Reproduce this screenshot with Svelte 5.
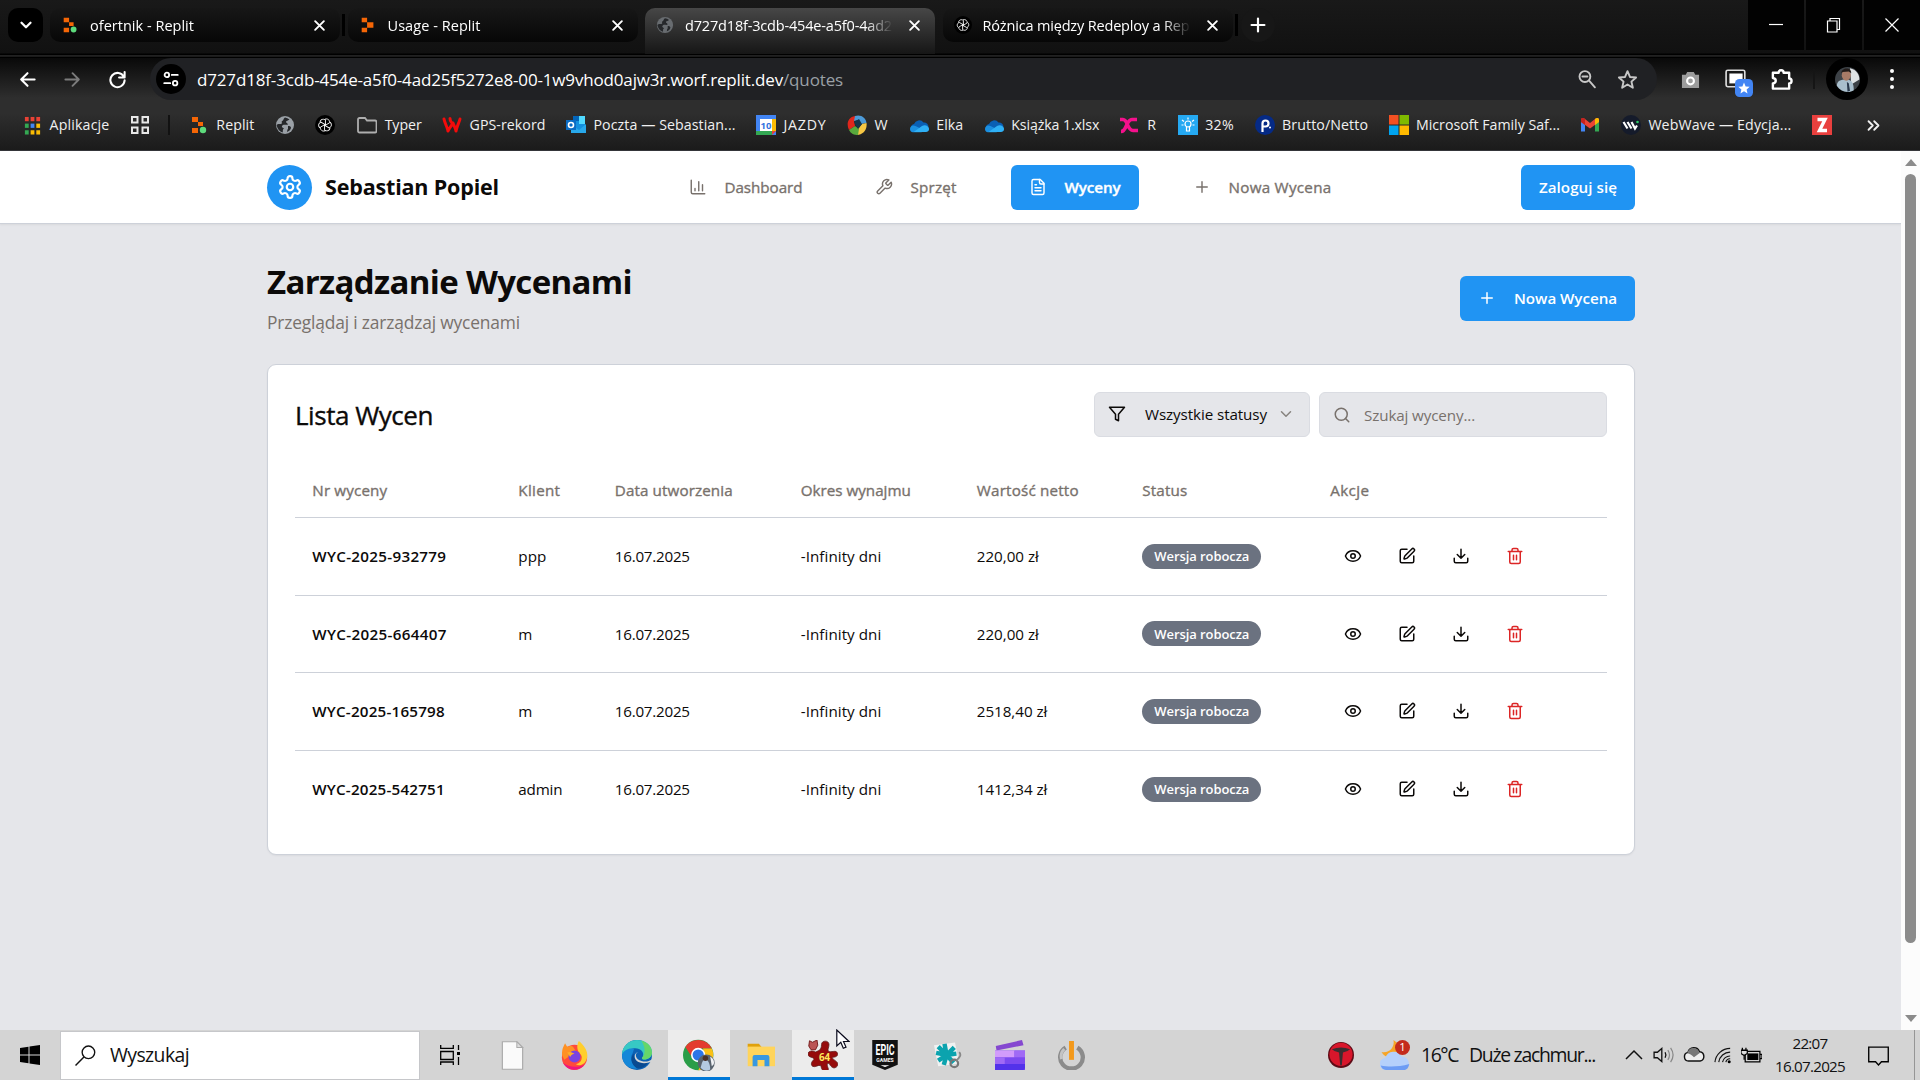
<script>
  // Sets a label to an exact width by spreading the difference over its letters.
  function fit(node, width) {
    node.style.display = 'inline-block';
    node.style.whiteSpace = 'pre';
    const natural = node.getBoundingClientRect().width;
    node.style.letterSpacing = (width - natural) / node.textContent.length + 'px';
    node.style.width = width + 'px';
  }

  const doc = '<path d="M15 2H6a2 2 0 0 0-2 2v16a2 2 0 0 0 2 2h12a2 2 0 0 0 2-2V7Z"/><path d="M14 2v4a2 2 0 0 0 2 2h4M10 9H8M16 13H8M16 17H8"/>';
  // Stroke icons on a 24 unit grid
  const line = {
    gear: '<path d="M12.22 2h-.44a2 2 0 0 0-2 2v.18a2 2 0 0 1-1 1.73l-.43.25a2 2 0 0 1-2 0l-.15-.08a2 2 0 0 0-2.73.73l-.22.38a2 2 0 0 0 .73 2.73l.15.1a2 2 0 0 1 1 1.72v.51a2 2 0 0 1-1 1.74l-.15.09a2 2 0 0 0-.73 2.73l.22.38a2 2 0 0 0 2.73.73l.15-.08a2 2 0 0 1 2 0l.43.25a2 2 0 0 1 1 1.73V20a2 2 0 0 0 2 2h.44a2 2 0 0 0 2-2v-.18a2 2 0 0 1 1-1.73l.43-.25a2 2 0 0 1 2 0l.15.08a2 2 0 0 0 2.73-.73l.22-.39a2 2 0 0 0-.73-2.73l-.15-.08a2 2 0 0 1-1-1.74v-.5a2 2 0 0 1 1-1.74l.15-.09a2 2 0 0 0 .73-2.73l-.22-.38a2 2 0 0 0-2.73-.73l-.15.08a2 2 0 0 1-2 0l-.43-.25a2 2 0 0 1-1-1.73V4a2 2 0 0 0-2-2z"/><circle cx="12" cy="12" r="3"/>',
    chart: '<path d="M3 3v16a2 2 0 0 0 2 2h16M18 17V9M13 17V5M8 17v-3"/>',
    wrench: '<path d="M14.7 6.3a1 1 0 0 0 0 1.4l1.6 1.6a1 1 0 0 0 1.4 0l3.77-3.77a6 6 0 0 1-7.94 7.94l-6.91 6.91a2.12 2.12 0 0 1-3-3l6.91-6.91a6 6 0 0 1 7.94-7.94l-3.76 3.76z"/>',
    doc,
    plus: '<path d="M5 12h14M12 5v14"/>',
    filter: '<path d="M22 3H2l8 9.46V19l4 2v-8.54z"/>',
    down: '<path d="m6 9 6 6 6-6"/>',
    search: '<circle cx="11" cy="11" r="8"/><path d="m21 21-4.3-4.3"/>',
    eye: '<path d="M2.06 12.35a1 1 0 0 1 0-.7 10.75 10.75 0 0 1 19.88 0 1 1 0 0 1 0 .7 10.75 10.75 0 0 1-19.88 0"/><circle cx="12" cy="12" r="3"/>',
    pen: '<path d="M12 3H5a2 2 0 0 0-2 2v14a2 2 0 0 0 2 2h14a2 2 0 0 0 2-2v-7"/><path d="M18.38 2.62a1 1 0 0 1 3 3l-9.01 9.02a2 2 0 0 1-.85.5l-2.87.84a.5.5 0 0 1-.62-.62l.84-2.87a2 2 0 0 1 .5-.85z"/>',
    download: '<path d="M21 15v4a2 2 0 0 1-2 2H5a2 2 0 0 1-2-2v-4M7 10l5 5 5-5M12 15V3"/>',
    trash: '<path d="M3 6h18M19 6v14a2 2 0 0 1-2 2H7a2 2 0 0 1-2-2V6M8 6V4a2 2 0 0 1 2-2h4a2 2 0 0 1 2 2v2M10 11v6M14 11v6"/>',
    back: '<path d="M21 12H4M12 4l-8 8 8 8"/>',
    forward: '<path d="M3 12h17M12 4l8 8-8 8"/>',
    reload: '<path d="M20 8.5A9 9 0 1 0 21 13M21 2.500v7h-7"/>',
    close: '<path d="M5 5l14 14M19 5 5 19"/>',
    zoomout: '<circle cx="9.500" cy="9" r="6.500"/><path d="m14.500 14 7 8M6.500 9h6"/>',
    star: '<path d="m12 2.500 2.800 6.600 7 .6-5.300 4.700 1.600 7-6.100-3.700-6.100 3.700 1.600-7L2.200 9.700l7-.6z"/>',
    puzzle: '<path d="M3 5h6a2.600 2.600 0 0 1 5.200 0H20v6a2.500 2.500 0 0 1 0 5v5.500H3v-5.500c4-.5 4-5 0-5.500z"/>',
    tune: '<circle cx="6.500" cy="6.500" r="3"/><path d="M13 6.500h8M3 17.500h8"/><circle cx="17.500" cy="17.500" r="3"/>',
    raquo: '<path d="m5 6 6 6-6 6M13 6l6 6-6 6"/>'
  };

  const gptKnot = '<g fill="none" stroke="#fff" stroke-width=".9"><path id="k" d="M10 4.200c2.400-1 5 .8 4.600 3.600l-4.800 2.800"/><path d="M10 4.200c2.400-1 5 .8 4.600 3.600l-4.800 2.800" transform="rotate(60 10 10)"/><path d="M10 4.200c2.400-1 5 .8 4.600 3.600l-4.800 2.800" transform="rotate(120 10 10)"/><path d="M10 4.200c2.400-1 5 .8 4.600 3.600l-4.800 2.800" transform="rotate(180 10 10)"/><path d="M10 4.200c2.400-1 5 .8 4.600 3.600l-4.800 2.800" transform="rotate(240 10 10)"/><path d="M10 4.200c2.400-1 5 .8 4.600 3.600l-4.800 2.800" transform="rotate(300 10 10)"/></g>'.replace(' id="k"', '');
  const globe = (c) => `<circle cx="10" cy="10" r="9" fill="${c}"/><path d="M10 2.500c-2 1-1 3-3 3.500-1 1 1 2-1 3-2 0-3-.5-4.500 1 1 4 3 6.500 6 7.500 1-1-.5-3 1.500-4-2-1-3-2-1-3.500 2-1 3 .5 5-.5-.5-2-2-1-2-3 1-1 2.500-1 3.500-2a8 8 0 0 0-4.500-2zM13 11c2 0 3 .5 3 2-.5 2-2 3-4 4 .5-2 0-2 1-3z" fill="#26282b"/>`;
  const cloud = '<path d="M2 13.500a4 4 0 0 1 3-4.500 5.500 5.500 0 0 1 9.500-1.500 4.500 4.500 0 0 1 5 5l-8 4H5a3 3 0 0 1-3-3z" fill="#0a5fb4"/><path d="M1 14c0-3 3-4.500 5.500-3l9 4.500-3 1.700H4A3.200 3.200 0 0 1 1 14z" fill="#1b8fe0"/><path d="M5 16.700 13 11c3-2 7.500 0 7 3.500 0 1.500-1.500 2.500-3 2.500H5z" fill="#2fb0f5"/>';
  const mini = '<path d="M3 2h6v5h5v4H9V7H3zM3 13h6v5H3z" fill="#f56606"/>';
  const appDots = ['#e94235', '#e94235', '#e94235', '#34a853', '#4285f4', '#fbbc04', '#34a853', '#fbbc04', '#fbbc04'];
  // Coloured icons on a 20 unit grid
  const art = {
    replit: mini + '<circle cx="14" cy="15" r="3.200" fill="#5ddb7c"/>',
    usage: '<path d="M3 2h6v5h7v6H9v5H3v-5h6V7H3z" fill="#f56606"/>',
    globe: globe('#9aa0a6'),
    globeDim: globe('#686c70'),
    gpt: '<circle cx="10" cy="10" r="10" fill="#000"/>' + gptKnot,
    apps: appDots.map((c, i) => `<rect x="${(i % 3) * 6 + 2}" y="${Math.floor(i / 3) * 7 + 1}" width="4" height="4.500" fill="${c}"/>`).join(''),
    grid: '<g fill="none" stroke="#e8e8e8" stroke-width="2"><path d="M2 2h5.500v5.500H2zM12.500 2H18v5.500h-5.500zM2 12.500h5.500V18H2zM12.500 12.500H18V18h-5.500z"/></g>',
    folder: '<path d="M1 4.500a1.500 1.500 0 0 1 1.500-1.500H8l2 2.500h8A1.500 1.500 0 0 1 19.500 7v9a1.500 1.500 0 0 1-1.500 1.500H2.500A1.500 1.500 0 0 1 1 16z" fill="none" stroke="#aeaeae" stroke-width="1.800"/>',
    gps: '<g fill="none" stroke="#f40b0b" stroke-width="3" stroke-linecap="round"><path d="M2 4c1 5 3 7 4 12M8 3.500c0 4 3 4 2 6s-3 4-4 6.500M11 8c1 3 2 4 3 8M18 4c-1 4-3 7-4 12"/></g>',
    outlook: '<path d="M7 1h12v16H7z" fill="#1490df"/><path d="M13 1h6v8h-6z" fill="#50d9ff"/><path d="M7 1h6v5H7z" fill="#0364b8"/><path d="M5 9l8 6 7-6v9H5z" fill="#28a8ea"/><path d="M0 5h10v10H0z" fill="#0a6cc4"/><circle cx="5" cy="10" r="2.500" fill="none" stroke="#fff" stroke-width="1.600"/>',
    calendar: '<path d="M0 0h20v20H0z" fill="#4285f4"/><path d="M16 4h4v12h-4z" fill="#fbbc04"/><path d="M0 16h16v4H0z" fill="#34a853"/><path d="M16 20v-4h4z" fill="#ea4335"/><path d="M4 4h12v12H4z" fill="#fff"/><text x="10" y="13.700" text-anchor="middle" font-size="9.500" font-weight="700" font-family="Open Sans, sans-serif" fill="#3474e0">10</text>',
    wheel: '<path d="M8 1C1 2-1 9 2 15l6-4-1-5 4-4z" fill="#e1261c"/><path d="M8 1c6-2 11 2 11.500 7L14 9l-3-4-4 1z" fill="#4d9bd8"/><path d="M19.500 8c1 7-4 12-9.500 12l1-6 4-5z" fill="#f6c744"/><path d="M2 15c2 4 5 5 9 5l1-6-4-3z" fill="#58a83c"/><path d="m7 7 5-3 3 5-4 5z" fill="#16354a"/>',
    cloud,
    pink: '<path d="M0 4.500h3c5 0 4 11 10 11h5M1 16.500c6 0 5-12 11-12h5" fill="none" stroke="#f5108c" stroke-width="3.600"/>',
    bulb: '<path d="M0 0h20v20H0z" fill="#25a9f2"/><g fill="none" stroke="#fff" stroke-width="1.200"><circle cx="10" cy="9" r="3"/><path d="M8.500 12v4h3v-4M10 2.500v2M4 5l2 1.500M16 5l-2 1.500M3.500 10h2M14.500 10h2"/></g>',
    p: '<circle cx="10" cy="10" r="10" fill="#052a86"/><path d="M7.500 17V8.500a3 3 0 1 1 3 3h-2" fill="none" stroke="#fff" stroke-width="2.200"/><circle cx="15" cy="12.500" r="1" fill="#fff"/>',
    ms: '<path d="M0 0h9.500v9.500H0z" fill="#f25022"/><path d="M10.500 0H20v9.500h-9.500z" fill="#7fba00"/><path d="M0 10.500h9.500V20H0z" fill="#00a4ef"/><path d="M10.500 10.500H20V20h-9.500z" fill="#ffb900"/>',
    gmail: '<path d="M1 5v11.500h4V9z" fill="#4285f4"/><path d="M19 5v11.500h-4V9z" fill="#34a853"/><path d="M1 4.500C1 3 3.500 2.500 5 4l5 4 5-4c1.500-1.500 4-1 4 .5V7l-9 6.500L1 7z" fill="#ea4335"/><path d="M15 4c1.500-1.500 4-1 4 .5V7l-4 3z" fill="#fbbc04"/><path d="M5 4C3.500 2.500 1 3 1 4.500V7l4 3z" fill="#c5221f"/>',
    webwave: '<circle cx="10" cy="10" r="10" fill="#151b2b"/><path d="m2.500 7 4 6.500M6.500 7l4 6.500M10.500 7l3.500 6.500 2-3" fill="none" stroke="#fff" stroke-width="2.200"/><circle cx="16.500" cy="7" r="1.300" fill="#29c765"/>',
    z: '<path d="M0 0h20v20H0z" fill="#e9403e"/><path d="M5.500 4.500h7.500l-5.500 11h7.500" fill="none" stroke="#fff" stroke-width="3.400"/>',
    camera: '<path d="M1 5h4l1.500-3h7L15 5h4v14H1z" fill="#9c9c9c"/><circle cx="10" cy="11.500" r="3.600" fill="none" stroke="#fff" stroke-width="2.200"/>',
    windows: '<path d="M0 3 8.500 1.800v7.700H0zM9.500 1.600 20 0v9.500H9.500zM0 10.500h8.500v7.700L0 17zM9.500 10.500H20V20L9.500 18.400z" fill="#000"/>',
    taskview: '<g fill="none" stroke="#000" stroke-width="1.300"><path d="M.7 0v3.300h12.600V0M.7 6.500h12.600v8H.7zM.7 20v-3h12.600v3M18.500 0v5M18.500 12v8"/></g><path d="M17 7h3v3h-3z"/>',
    file: '<path d="M3 .5h10l4 4v15H3z" fill="#fafafa" stroke="#aaa" stroke-width=".8"/><path d="M13 .5v4h4z" fill="#ddd" stroke="#aaa" stroke-width=".7"/>',
    firefox: '<circle cx="10" cy="11.300" r="8.700" fill="#ff4a3c"/><path d="M2 15a8.700 8.700 0 0 0 15 1c-5 3-11 2-15-1z" fill="#ef167c"/><path d="M1.500 10C1 5 3 3 3.500 1.500c.5 1 1 2 1.800 2.400C7 3 8.500 3.500 9 4l2 3-8 6z" fill="#ff9123"/><path d="M13 0c5 4 8 10 4 15-2 2-4 2-6 1 4-1 5-5 3-7-2-2-3-5-1-9z" fill="#ffce2d"/><circle cx="10" cy="10.700" r="4.100" fill="#7a43e0"/><path d="M5 8c2-1 4 0 5 1-2 0-2 1-3 2z" fill="#ffae29"/>',
    edge: '<circle cx="10" cy="10" r="10" fill="#0c61b4"/><path d="M0 10C0 4 5 0 10 0c6 0 10 4 10 8 0 3.500-2.500 5-5 5-2 0-2-1-1-2 1-3-2-6-6-5.500C4 6 1 8 0 10z" fill="#37c8c4"/><path d="M13 .5c4 1 7 4 7 8 0 3-3 4.500-5 4.500s-2-1-1-2c2-3 1-7-1-10.500z" fill="#65d66a"/><path d="M7 9c-2 3 0 8 4 10-6 1-11-3-11-9 1-3 5-5 8-4z" fill="#1587d8"/><path d="M8 9c-1 4 3 7 10 5-2 4-5 5-8 5-4-3-5-7-2-10z" fill="#0a4a91"/><path d="M11 8c-3 1-2 5 2 6 3 1 5 0 7-1l-.5 1.500c-2 .8-5 1.400-7.500.5-4-1-5-6-1-7z" fill="#d5d5d5"/>',
    chrome: '<circle cx="9.500" cy="10" r="9.500" fill="#2a9d48"/><path d="M1.500 5A9.500 9.500 0 0 1 18 6H9.500L6 12z" fill="#e33b2e"/><path d="M18 6a9.500 9.500 0 0 1-8.500 13.500l4-7.500-1-6z" fill="#fbc116"/><circle cx="9.500" cy="10" r="4.500" fill="#fff"/><circle cx="9.500" cy="10" r="3.500" fill="#2c75e8"/><circle cx="14.500" cy="15" r="5.300" fill="#59636e"/><path d="M11 18c1-3 1-5 3-5s3 3 3 6c-2 1.500-4 1-6-1z" fill="#b4cbe2"/><circle cx="14" cy="12" r="1.700" fill="#4a3027"/><path d="M17 11c3 2 3 5 1 6z" fill="#f0f2f5"/>',
    explorer: '<path d="M.5 2h8l2 2.500h-10z" fill="#e0a10c"/><path d="M.5 4H20v14H.5z" fill="#ffd45b"/><path d="M4 18v-6.500A1.500 1.500 0 0 1 5.500 10h9a1.500 1.500 0 0 1 1.500 1.500V18h-3.500v-4.500h-5V18z" fill="#3898e2"/>',
    splat: '<path d="M9 3c0-3 5-3 5 0 0 2-1 3-.5 4.500 2 1 5-1 6 1s-1 3-3 3c-1 1 2 2 3 3.500s0 3-1.500 3.500-3-1-4-3c-2 0-1 2-.5 3.500s-1.500 2-3 1.500-1.500-2-2-3.500c-2-.5-4 1.500-5.500.5s-.5-3.500 1-4.500c0-2-4-1-4-3.500S3 7 5 8c2-1 4-1 4-5z" fill="#960b0b" stroke="#5b1b1b" stroke-width=".5"/><path d="m1 .5 2 1 3-1.500.5 3.500-1.500 3H2L.5 4z" fill="#bb5454" stroke="#701515" stroke-width=".6"/><text x="11" y="14" text-anchor="middle" font-size="6.500" font-weight="700" font-family="Open Sans, sans-serif" fill="#ffe95a">64</text>',
    epic: '<path d="M1.500 0h17v16.500L10 20l-8.500-3.500z" fill="#111"/><text transform="scale(1 1.700)" x="10" y="6" text-anchor="middle" font-size="5.900" font-weight="700" font-family="Roboto, sans-serif" fill="#fff">EPIC</text><text x="10" y="14.500" text-anchor="middle" font-size="3.400" font-weight="700" font-family="Roboto, sans-serif" fill="#fff">GAMES</text><path d="M7 16.800h6L10 18z" fill="#fff"/>',
    teal: '<path d="m0 3 15-2 3 15-15 2z" fill="#f0f2f2"/><g stroke="#0ba3ae" stroke-width="3.200"><path d="m3 4 6 6 5 5.500M7.500 2l1.500 8-2 7M14.500 4.500 9 10l-6 4M1.500 8.500 9 10l7-1"/></g><circle cx="14.500" cy="16" r="2.700" fill="none" stroke="#777" stroke-width="1.600"/><path d="M16 14c2-2 4-4 2-6" stroke="#888" fill="none" stroke-width="1.300"/>',
    clip: '<path d="M.5 4 18 0l1 3.500L1 7z" fill="#8548d0"/><path d="M0 7h20v13H1.500A1.500 1.500 0 0 1 0 18.500z" fill="#7c4af0"/><path d="M0 7h13v4.500H0z" fill="#d29bfb"/><path d="M13 7h7v4.500h-7zM0 11.500h6.500V16H0z" fill="#a06af5"/><path d="M0 16h20v2.500a1.500 1.500 0 0 1-1.500 1.500H0z" fill="#5232ea"/>',
    power: '<path d="M6 4.500a7.800 7.800 0 1 0 8 0" fill="none" stroke="#8b8b8b" stroke-width="3"/><path d="M5 5.500a7.500 7.500 0 0 0-2 7" fill="none" stroke="#c4c4c4" stroke-width="2"/><path d="M8.300 0h3.400v13H8.300z" fill="#f3991b"/>',
    tesla: '<circle cx="10" cy="10" r="10" fill="#5e0b16"/><circle cx="10" cy="9.500" r="8.900" fill="#d8162b"/><path d="M3 5.500q7-2.500 14 0l-2 1.500-3.500 1L10.600 18H9.400L8.500 8 5 7z" fill="#3a2d30"/>',
    weather: '<path d="M9 0c1 5-3 9-8 8 2 4 8 5 11 1 2-4 0-7-3-9z" fill="#f7a526"/><path d="M4 20a4 4 0 0 1-.5-8 6 6 0 0 1 11-1 4.600 4.600 0 0 1 1.500 9z" fill="#b5d0fb"/><path d="M4 20a4 4 0 0 1-3.500-3c5 1 12 1 19-1-.5 2.500-1.500 4-3.500 4z" fill="#6d9cf4"/><circle cx="15" cy="5" r="5" fill="#c42b1c"/><text x="15" y="7.500" text-anchor="middle" font-size="7.500" font-family="Open Sans, sans-serif" fill="#fff">1</text>',
    sound: '<path d="M1 7.500h3L8 4v12l-4-3.500H1z" fill="none" stroke="#111" stroke-width="1.200"/><path d="M11 7.500q1.500 2.500 0 5" fill="none" stroke="#111" stroke-width="1.200"/><path d="M13.500 5.500q3 4.500 0 9M16 3.500q4.500 6.500 0 13" fill="none" stroke="#888" stroke-width="1.100"/>',
    traycloud: '<path d="M5 15.500a4 4 0 0 1-.5-7.900A5.500 5.500 0 0 1 15 7a4.300 4.300 0 0 1 .5 8.500z" fill="#eee" stroke="#111" stroke-width="1.300"/><path d="M4 8.500a5.500 5.500 0 0 1 10.500-1.500l1 1-5.500 4c-2-2-4-3-6-3.500z" fill="#777"/>',
    wifi: '<g fill="none" stroke="#111" stroke-width="1.200"><path d="M1 17A16 16 0 0 1 17 2.500M5 17A12 12 0 0 1 17 6.500M9 17a8 8 0 0 1 8-6.500M12.500 17a4 4 0 0 1 4.500-3.500"/></g><circle cx="16" cy="16.500" r="1.600"/>',
    battery: '<path d="M4 6h14v10H4zM18 9h2v4h-2z" fill="none" stroke="#000" stroke-width="1.200"/><path d="M6 8h10.500v6.300H6z"/><path d="M0 5h6v3L3 10 0 8zM1.300 2.500v3M4.700 2.500v3M3 9v5" stroke="#000" fill="#ddd" stroke-width="1.200"/>',
    notify: '<path d="M.7 2h18.600v14h-6.500L10 19l-2.800-3H.7z" fill="none" stroke="#000" stroke-width="1.300"/>',
    magnifier: '<circle cx="12.800" cy="7" r="6" fill="none" stroke="#111" stroke-width="1.300"/><path d="m8.500 11.500-8 8" stroke="#111" stroke-width="1.400"/>',
    caret: '<path d="m2 14 8-8 8 8" fill="none" stroke="#111" stroke-width="1.500"/>',
    winmin: '<path d="M3 9.500h14" stroke="#fff" stroke-width="1.200"/>',
    winmax: '<path d="M3.500 6h9.500v11H3.500zM6 6V3.500h9.500v11H13" fill="none" stroke="#fff" stroke-width="1.200"/>',
    winclose: '<path d="m3.500 3.500 13 13M16.500 3.500l-13 13" stroke="#fff" stroke-width="1.200"/>',
    pip: '<rect x="1" y="2" width="17" height="15" rx="1.500" fill="none" stroke="#ddd" stroke-width="1.500"/><path d="M4 5h12v9H4z" fill="#fff"/>',
    badge: '<rect width="20" height="20" rx="5" fill="#4285f4"/><path d="m10 4 1.800 4.200 4.500.4-3.400 3 1 4.400-3.900-2.300L6.100 16l1-4.400-3.400-3 4.500-.4z" fill="#fff"/>',
    avatar: '<circle cx="10" cy="10" r="10" fill="#3d4247"/><path d="M12 1c5 1 7.500 5 7.500 9L13 14z" fill="#dfe3e5"/><path d="M1.500 15c0-4 3-5 7.500-5s6 3 6 8.500c-4 2.500-10 2-13.500-3.500z" fill="#a9bfcd"/><ellipse cx="9" cy="6.500" rx="3.600" ry="4.500" fill="#a77b67"/><path d="M5 5c0-4.500 8-5.500 8 0l-2-1.500-5 .5z" fill="#221c1a"/><path d="m9.500 12 1.500 1 1 6-2 .8z" fill="#29394c"/>'
  };

  const tabs = [
    { icon: 'replit', title: 'ofertnik - Replit', w: 104 },
    { icon: 'usage', title: 'Usage - Replit', w: 93 },
    { icon: 'globeDim', title: 'd727d18f-3cdb-454e-a5f0-4ad2', w: 207, active: true },
    { icon: 'gpt', title: 'Różnica między Redeploy a Rep', w: 207 }
  ];

  const bookmarks = [
    { icon: 'replit', label: 'Replit', w: 38 },
    { icon: 'globe' },
    { icon: 'gpt', last: true },
    { icon: 'folder', label: 'Typer', w: 37 },
    { icon: 'gps', label: 'GPS-rekord', w: 76 },
    { icon: 'outlook', label: 'Poczta — Sebastian...', w: 142 },
    { icon: 'calendar', label: 'JAZDY', w: 43 },
    { icon: 'wheel', label: 'W', w: 14 },
    { icon: 'cloud', label: 'Elka', w: 27 },
    { icon: 'cloud', label: 'Książka 1.xlsx', w: 88 },
    { icon: 'pink', label: 'R', w: 10 },
    { icon: 'bulb', label: '32%', w: 29 },
    { icon: 'p', label: 'Brutto/Netto', w: 86 },
    { icon: 'ms', label: 'Microsoft Family Saf...', w: 144 },
    { icon: 'gmail' },
    { icon: 'webwave', label: 'WebWave — Edycja...', w: 143 },
    { icon: 'z' }
  ];

  const nav = [
    { icon: 'chart', label: 'Dashboard', w: 78 },
    { icon: 'wrench', label: 'Sprzęt', w: 46 },
    { icon: 'doc', label: 'Wyceny', w: 56, active: true },
    { icon: 'plus', label: 'Nowa Wycena', w: 103 }
  ];

  const columns = [
    ['Nr wyceny', 75], ['Klient', 42], ['Data utworzenia', 118], ['Okres wynajmu', 110],
    ['Wartość netto', 102], ['Status', 45], ['Akcje', 39]
  ];

  const quotes = [
    { id: 'WYC-2025-932779', iw: 134, client: 'ppp', cw: 28, value: '220,00 zł', vw: 62 },
    { id: 'WYC-2025-664407', iw: 134.5, client: 'm', cw: 13, value: '220,00 zł', vw: 62 },
    { id: 'WYC-2025-165798', iw: 132.5, client: 'm', cw: 13, value: '2518,40 zł', vw: 70.5 },
    { id: 'WYC-2025-542751', iw: 132.5, client: 'admin', cw: 44, value: '1412,34 zł', vw: 70.5 }
  ];

  const apps = [
    { icon: 'taskview', size: 20 }, { icon: 'file', size: 29 }, { icon: 'firefox', size: 29 },
    { icon: 'edge', size: 30 }, { icon: 'chrome', size: 32, open: true }, { icon: 'explorer', size: 28 },
    { icon: 'splat', size: 30, open: true }, { icon: 'epic', size: 30 }, { icon: 'teal', size: 28 },
    { icon: 'clip', size: 30 }, { icon: 'power', size: 29 }
  ];
</script>

{#snippet stroke(name, size, width = 2)}
  <svg width={size} height={size} viewBox="0 0 24 24" fill="none" stroke="currentColor" stroke-width={width} stroke-linecap="round" stroke-linejoin="round">{@html line[name]}</svg>
{/snippet}

{#snippet pic(name, size)}
  <svg width={size} height={size} viewBox="0 0 20 20">{@html art[name]}</svg>
{/snippet}

<div class="screen">
  <div class="titlebar">
    <div class="tabsearch">{@render stroke('down', 18, 3)}</div>
    {#each tabs as tab, i}
      <div class="tab" class:active={tab.active}>
        <span class="favicon">{@render pic(tab.icon, 18)}</span>
        <span class="title"><span use:fit={tab.w}>{tab.title}</span></span>
        <span class="x">{@render stroke('close', 15, 3)}</span>
      </div>
      <div class="gap" class:bar={i === 0 || i === 3}></div>
    {/each}
    <div class="newtab">{@render stroke('plus', 22, 2.4)}</div>
    <div class="controls">
      <div>{@render pic('winmin', 20)}</div>
      <div>{@render pic('winmax', 20)}</div>
      <div>{@render pic('winclose', 20)}</div>
    </div>
  </div>

  <div class="chrome">
    <div class="toolbar">
      <div class="navbtn">{@render stroke('back', 19, 2.6)}</div>
      <div class="navbtn dim">{@render stroke('forward', 19, 2.4)}</div>
      <div class="navbtn">{@render stroke('reload', 19, 2.6)}</div>
      <div class="omnibox">
        <div class="site">{@render stroke('tune', 18, 2.4)}</div>
        <div class="url"><span use:fit={586}>d727d18f-3cdb-454e-a5f0-4ad25f5272e8-00-1w9vhod0ajw3r.worf.replit.dev</span><span class="path" use:fit={60}>/quotes</span></div>
        <div class="omniicons">{@render stroke('zoomout', 20, 2.3)}{@render stroke('star', 21, 2.2)}</div>
      </div>
      <div class="ext camera">{@render pic('camera', 19)}</div>
      <div class="ext pip">{@render pic('pip', 22)}<span class="pipbadge">{@render pic('badge', 18)}</span></div>
      <div class="ext puzzle">{@render stroke('puzzle', 23, 2.5)}</div>
      <div class="tooldiv"></div>
      <div class="avatar">{@render pic('avatar', 25)}</div>
      <div class="dots"><i></i><i></i><i></i></div>
    </div>
    <div class="bookmarks">
      <div class="bm apps">{@render pic('apps', 19)}<span use:fit={60}>Aplikacje</span></div>
      {@render pic('grid', 20)}
      <div class="bmdiv"></div>
      {#each bookmarks as b}
        <div class="bm" class:last={b.last}>{@render pic(b.icon, 20)}{#if b.label}<span use:fit={b.w}>{b.label}</span>{/if}</div>
      {/each}
      <div class="more">{@render stroke('raquo', 17, 2.6)}</div>
    </div>
  </div>

  <div class="viewport">
    <div class="page">
      <header>
        <div class="logo">{@render stroke('gear', 26)}</div>
        <div class="brand"><span use:fit={174}>Sebastian Popiel</span></div>
        <nav>
          {#each nav as n}
            <a class:active={n.active}>{@render stroke(n.icon, 18, 1.9)}<span use:fit={n.w}>{n.label}</span></a>
          {/each}
        </nav>
        <button class="primary"><span use:fit={78}>Zaloguj się</span></button>
      </header>

      <main>
        <div class="heading">
          <div>
            <h1><span use:fit={365}>Zarządzanie Wycenami</span></h1>
            <p><span use:fit={253}>Przeglądaj i zarządzaj wycenami</span></p>
          </div>
          <button class="primary">{@render stroke('plus', 18, 2)}<span use:fit={103}>Nowa Wycena</span></button>
        </div>

        <section class="card">
          <div class="cardhead">
            <h2><span use:fit={138}>Lista Wycen</span></h2>
            <div class="select">{@render stroke('filter', 18)}<span use:fit={122}>Wszystkie statusy</span><em>{@render stroke('down', 18)}</em></div>
            <div class="search">{@render stroke('search', 18)}<span use:fit={111}>Szukaj wyceny...</span></div>
          </div>
          <div class="row head">
            {#each columns as [label, w]}
              <div><span use:fit={w}>{label}</span></div>
            {/each}
          </div>
          {#each quotes as q}
            <div class="row">
              <div class="id"><span use:fit={q.iw}>{q.id}</span></div>
              <div><span use:fit={q.cw}>{q.client}</span></div>
              <div><span use:fit={75}>16.07.2025</span></div>
              <div><span use:fit={80.5}>-Infinity dni</span></div>
              <div><span use:fit={q.vw}>{q.value}</span></div>
              <div><span class="badge"><span use:fit={95}>Wersja robocza</span></span></div>
              <div class="actions">
                <i>{@render stroke('eye', 18)}</i><i>{@render stroke('pen', 18)}</i><i>{@render stroke('download', 18)}</i><i class="red">{@render stroke('trash', 18)}</i>
              </div>
            </div>
          {/each}
        </section>
      </main>
    </div>
    <div class="scrollbar"><b class="up"></b><div class="thumb"></div><b class="dn"></b></div>
  </div>

  <div class="taskbar">
    <div class="start">{@render pic('windows', 20)}</div>
    <div class="tasksearch">{@render pic('magnifier', 21)}<span use:fit={79}>Wyszukaj</span></div>
    {#each apps as a}
      <div class="app" class:open={a.open}>{@render pic(a.icon, a.size)}</div>
    {/each}
    <div class="tray">
      {@render pic('tesla', 26)}
      <div class="weather">{@render pic('weather', 30)}<span use:fit={37}>16°C</span><span use:fit={126}>Duże zachmur...</span></div>
      <div class="trayicons">{@render pic('caret', 20)}{@render pic('sound', 22)}{@render pic('traycloud', 22)}{@render pic('wifi', 19)}{@render pic('battery', 21)}</div>
      <div class="clock"><span use:fit={35}>22:07</span><span use:fit={70}>16.07.2025</span></div>
      {@render pic('notify', 21)}
      <div class="peek"></div>
    </div>
  </div>

  <svg class="cursor" width="14" height="21" viewBox="0 0 14 21"><path d="M.8 1v16l4-3.700 2.500 6 2.700-1.200-2.500-5.600H13z" fill="#fff" stroke="#0b0b1c" stroke-width="1.200" /></svg>
</div>

<style>
  :global(body) { margin: 0; overflow: hidden; }
  .screen { position: relative; width: 1920px; height: 1080px; display: flex; flex-direction: column; overflow: hidden; font-family: "Open Sans", "Noto Sans", sans-serif; color: #0c0a09; }
  .screen :global(svg) { display: block; flex: none; }
  .screen * { box-sizing: border-box; }

  .titlebar { height: 58px; flex: none; display: flex; align-items: flex-start; padding: 8px 0 0 8px; background: linear-gradient(#191919, #111 53px, #000 54px, #000 55px, #242424 55px, #181818 57px, #000 57px); color: #fff; font-size: 14.500px; }
  .tabsearch { width: 35px; height: 34px; border-radius: 10px; background: #000; display: grid; place-items: center; margin-right: 7px; }
  .tab { width: 290px; height: 34px; border-radius: 10px; background: linear-gradient(#171717, #070707); display: flex; align-items: center; padding-left: 11px; }
  .tab.active { height: 46px; border-radius: 10px 10px 0 0; background: linear-gradient(#474747, #161616); padding-bottom: 12px; }
  .favicon { width: 18px; margin-right: 11px; }
  .title { width: 208px; line-height: 24px; padding-top: 1px; mask-image: linear-gradient(90deg, #000 180px, transparent 208px); }
  .x { margin-left: 14px; }
  .gap { width: 7.500px; height: 22px; margin-top: 6px; display: flex; justify-content: center; }
  .gap.bar::after { content: ''; width: 3px; background: #000; }
  .newtab { width: 34px; height: 34px; border-radius: 50%; background: #171717; display: grid; place-items: center; margin-left: 1px; }
  .controls { margin: -8px 0 0 auto; display: flex; gap: 2px; }
  .controls div { width: 56px; height: 50px; background: #020202; display: grid; place-items: center; }

  .chrome { height: 93px; flex: none; background: linear-gradient(#090909, #2e2e2e 40px, #2e2e2e 55px, #1b1b1b 92px, #35363a 92px); color: #fff; }
  .toolbar { height: 42px; display: flex; align-items: center; padding-left: 5px; }
  .navbtn { width: 45px; display: grid; place-items: center; }
  .navbtn.dim { color: #7c7c7c; }
  .omnibox { width: 1507px; height: 42px; margin-left: 10px; border-radius: 21px; background: #202124; display: flex; align-items: center; padding-left: 6px; }
  .site { width: 30px; height: 30px; border-radius: 50%; background: #000; display: grid; place-items: center; }
  .url { margin-left: 11px; padding-top: 1px; font-size: 17px; line-height: 24px; white-space: nowrap; display: flex; }
  .path { color: #9aa0a6; }
  .omniicons { margin: 0 19px 0 auto; display: flex; gap: 20px; color: #c7c7c7; }
  .camera { margin-left: 24px; }
  .pip { position: relative; margin-left: 25px; }
  .pipbadge { position: absolute; left: 10px; top: 11px; }
  .puzzle { margin-left: 22.500px; }
  .tooldiv { width: 2px; height: 20px; background: #151515; margin-left: 20px; }
  .avatar { width: 42px; height: 42px; border-radius: 50%; background: #000; display: grid; place-items: center; margin-left: 11.500px; }
  .dots { width: 5px; margin-left: 22px; display: grid; gap: 4px; }
  .dots i { width: 4px; height: 4px; border-radius: 50%; background: #fff; }
  .bookmarks { height: 50px; display: flex; align-items: center; padding-left: 23px; gap: 20.450px; font-size: 14.200px; line-height: 20px; color: #f0f0f0; }
  .bm { display: flex; gap: 7.500px; align-items: center; }
  .bm.last { margin-right: 1.500px; }
  .bmdiv { width: 2px; height: 20px; background: #121212; margin: 0 -2px 0 -2px; }
  .more { margin-left: 13px; }

  .viewport { flex: 1; display: flex; min-height: 0; }
  .page { flex: 1; background: #e5e6ea; }
  header { height: 73px; background: #fff; border-bottom: 1px solid #cdd1d9; box-shadow: 0 1px 2px rgba(0, 0, 0, .06); display: flex; align-items: center; padding: 0 266px 0 267px; }
  .logo { width: 45px; height: 45px; border-radius: 50%; background: #2094f3; color: #fff; display: grid; place-items: center; }
  .brand { margin-left: 13px; font-size: 21.500px; font-weight: 700; line-height: 30px; }
  nav { display: flex; gap: 36px; margin-left: 171.500px; }
  nav a { height: 45px; padding: 0 18px; display: flex; align-items: center; gap: 18px; border-radius: 6px; color: #78716c; font-size: 15.200px; line-height: 22px; }
  nav a span, .row.head span, h2 span { -webkit-text-stroke: .35px currentColor; }
  nav a.active { background: #2094f3; color: #fff; font-weight: 600; }
  .primary { margin-left: auto; height: 45px; padding: 0 18px; border: 0; border-radius: 6px; background: #2094f3; color: #fff; font: 600 15.200px/22px "Open Sans", "Noto Sans", sans-serif; display: flex; align-items: center; gap: 18px; }

  main { padding: 36px 266px 0 267px; }
  .heading { display: flex; align-items: center; height: 77px; }
  h1 { margin: 0; font-size: 33px; font-weight: 700; line-height: 42px; }
  p { margin: 6px 0 0; font-size: 17.400px; line-height: 27px; color: #78716c; }
  .heading .primary { padding-bottom: 1px; }
  .card { margin-top: 27px; height: 491px; background: #fff; border: 1px solid #cdd1d9; border-radius: 9px; box-shadow: 0 1px 2px rgba(0, 0, 0, .05); padding: 27px; }
  .cardhead { display: flex; align-items: center; height: 45px; margin-bottom: 27px; }
  h2 { margin: 0 auto 0 0; font-size: 26px; font-weight: 400; line-height: 34px; }
  .select, .search { height: 45px; border: 1px solid #dadce2; border-radius: 6px; background: #e5e6ea; display: flex; align-items: center; font-size: 15.200px; line-height: 22px; }
  .select { width: 216px; padding: 0 0 1px 13px; gap: 19px; margin-right: 9px; }
  .select em { margin-left: -9px; color: #87837f; }
  .search { width: 288px; padding-left: 12.500px; gap: 13.500px; color: #78716c; }
  .row { height: 77.500px; display: grid; grid-template-columns: 206px 96.500px 186px 176px 165.500px 188px 1fr; align-items: center; padding-left: 17.300px; border-bottom: 1px solid #cdd1d9; font-size: 15.200px; line-height: 22px; }
  .row:last-child { border: 0; }
  .row.head { height: 54px; padding-bottom: 2px; color: #78716c; }
  .id { font-weight: 600; }
  .badge { display: inline-flex; align-items: center; height: 25px; padding: 0 12px; border-radius: 13px; background: #6b7280; color: #fff; font-size: 13px; font-weight: 600; line-height: 18px; vertical-align: middle; }
  .actions { display: flex; gap: 36px; padding-left: 13.500px; }
  .red { color: #dc2626; }

  .scrollbar { width: 19px; background: #fcfcfc; display: flex; flex-direction: column; align-items: center; padding: 8px 0; }
  .up, .dn { border: 6.500px solid transparent; border-top: 0; border-bottom: 7px solid #8b8b8b; }
  .dn { transform: scaleY(-1); margin-top: auto; }
  .thumb { width: 11px; height: 769px; margin-top: 8px; border-radius: 6px; background: #8b8b8b; }

  .taskbar { height: 50px; flex: none; background: #d4d4d4; display: flex; align-items: center; font-size: 19.400px; line-height: 28px; color: #111; }
  .start { width: 60px; display: grid; place-items: center; }
  .tasksearch { width: 360px; height: 49px; background: #fff; border: 1px solid #c6c7ca; display: flex; align-items: center; padding-left: 14px; gap: 14px; margin-right: -1px; }
  .app { width: 62.200px; height: 50px; display: grid; place-items: center; }
  .app.open { background: #ececec; border-bottom: 3px solid #0078d7; border-top: 3px solid #ececec; }
  .tray { margin-left: auto; display: flex; align-items: center; height: 50px; }
  .weather { display: flex; align-items: center; margin-left: 26px; }
  .weather span { margin-left: 11px; }
  .trayicons { display: flex; align-items: center; gap: 8.500px; margin-left: 29px; }
  .clock { width: 74px; margin-left: 11px; display: flex; flex-direction: column; align-items: center; font-size: 15.200px; line-height: 23px; margin-right: 21px; }
  .peek { width: 6px; height: 50px; border-left: 1px solid #969696; margin-left: 25px; }
  .cursor { position: absolute; left: 836px; top: 1029px; }
</style>
